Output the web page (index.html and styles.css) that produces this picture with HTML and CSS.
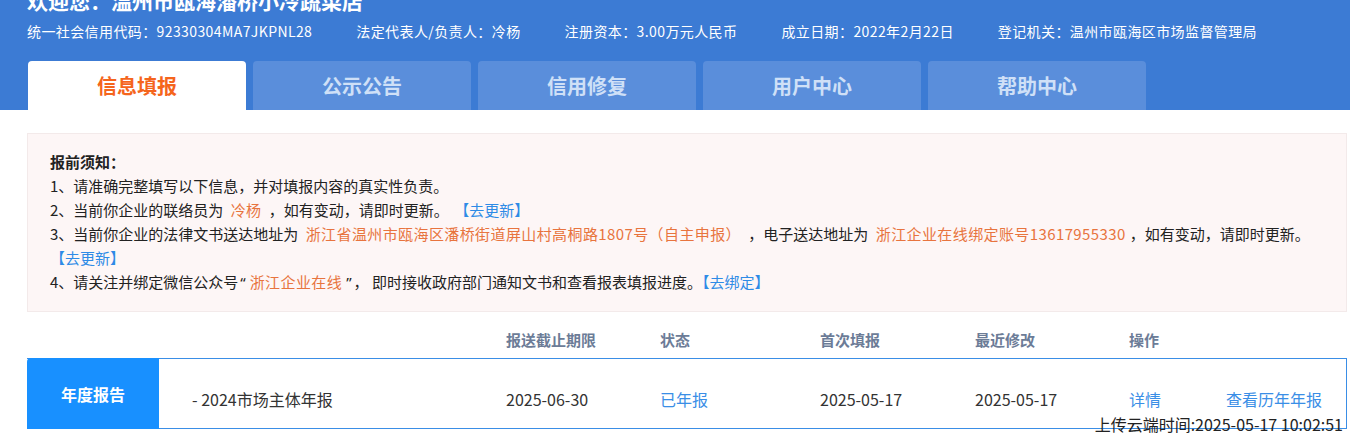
FILE: index.html
```html
<!DOCTYPE html>
<html lang="zh-CN">
<head>
    <meta charset="UTF-8">
    <meta name="viewport" content="width=device-width, initial-scale=1.0">
    <title>信息填报</title>
    <link rel="stylesheet" href="styles.css">
</head>
<body>
    <div class="header">
        <h1 class="welcome">欢迎您：温州市瓯海潘桥小冷蔬菜店</h1>
        <div class="info-row">
            <span>统一社会信用代码：92330304MA7JKPNL28</span>
            <span>法定代表人/负责人：冷杨</span>
            <span>注册资本：3.00万元人民币</span>
            <span>成立日期：2022年2月22日</span>
            <span>登记机关：温州市瓯海区市场监督管理局</span>
        </div>
        <div class="tabs">
            <div class="tab active">信息填报</div>
            <div class="tab">公示公告</div>
            <div class="tab">信用修复</div>
            <div class="tab">用户中心</div>
            <div class="tab">帮助中心</div>
        </div>
    </div>

    <div class="main">
        <div class="notice">
            <p class="notice-title">报前须知：</p>
            <p>1、请准确完整填写以下信息，并对填报内容的真实性负责。</p>
            <p>2、当前你企业的联络员为 <span class="hl">冷杨</span> ，如有变动，请即时更新。 <a class="link gap">【去更新】</a></p>
            <p>3、当前你企业的法律文书送达地址为 <span class="hl">浙江省温州市瓯海区潘桥街道屏山村高桐路1807号（自主申报）</span> ，电子送达地址为 <span class="hl">浙江企业在线绑定账号13617955330</span>，如有变动，请即时更新。 <a class="link">【去更新】</a></p>
            <p>4、请关注并绑定微信公众号<span class="quote">“</span><span class="hl tight">浙江企业在线</span><span class="quote">”</span>， 即时接收政府部门通知文书和查看报表填报进度。<a class="link">【去绑定】</a></p>
        </div>

        <div class="report-head">
            <span></span>
            <span></span>
            <span>报送截止期限</span>
            <span>状态</span>
            <span>首次填报</span>
            <span>最近修改</span>
            <span>操作</span>
            <span></span>
        </div>

        <div class="report-row">
            <div class="report-type">年度报告</div>
            <div class="cell name">- 2024市场主体年报</div>
            <div class="cell">2025-06-30</div>
            <div class="cell blue">已年报</div>
            <div class="cell">2025-05-17</div>
            <div class="cell">2025-05-17</div>
            <div class="cell blue">详情</div>
            <div class="cell blue">查看历年年报</div>
            <div class="upload-time">上传云端时间:2025-05-17 10:02:51</div>
        </div>
    </div>
</body>
</html>
```

FILE: styles.css
```css
* {
    margin: 0;
    padding: 0;
    box-sizing: border-box;
}

body {
    font-family: "Noto Sans CJK SC", "Noto Sans", sans-serif;
    color: #222;
    background: #fff;
    min-height: 100vh;
    overflow: hidden;
}

.header {
    display: flow-root;
    background: #3c7bd4;
    color: #fff;
    padding-left: 27px;
}

.welcome {
    margin-top: -11px;
    font-size: 21px;
    line-height: 22px;
    font-weight: bold;
}

.info-row {
    display: flex;
    gap: 44px;
    margin-top: 10px;
    font-size: 14px;
    line-height: 20px;
    letter-spacing: 0.4px;
}

.tabs {
    display: flex;
    gap: 7px;
    margin-top: 20px;
    padding-left: 1px;
}

.tab {
    width: 218px;
    height: 49px;
    line-height: 49px;
    text-align: center;
    font-size: 20px;
    font-weight: bold;
    color: #cfe0f7;
    background: #5a8edb;
    border-radius: 4px 4px 0 0;
}

.tab.active {
    background: #fff;
    color: #f5651c;
}

.main {
    width: 1320px;
    margin-left: 27px;
    padding-bottom: 30px;
}

.notice {
    margin-top: 23px;
    background: #fdf6f6;
    border: 1px solid #f3eaea;
    padding: 16px 22px 17px 22px;
    font-size: 15px;
    line-height: 24px;
}

.notice-title {
    font-weight: bold;
}

.hl {
    color: #e8743e;
    padding: 0 4px;
    letter-spacing: 0.4px;
}

.hl.tight {
    padding: 0 2px;
}

.quote {
    font-family: "Noto Sans", sans-serif;
    color: #222;
    padding: 0 2px;
}

.link {
    color: #2e8be6;
    cursor: pointer;
    white-space: nowrap;
}

.link.gap {
    margin-left: 2px;
}

.report-head,
.report-row {
    display: grid;
    grid-template-columns: 132px 347px 154px 160px 155px 154px 97px 1fr;
}

.report-head {
    margin-top: 14px;
    height: 28px;
    line-height: 28px;
    font-size: 15px;
    font-weight: bold;
    color: #6c7c97;
}

.report-row {
    position: relative;
    margin-top: 4px;
    height: 71px;
    border: 1px solid #3a8ee6;
    border-left: none;
    align-items: center;
    font-size: 16px;
    color: #333;
}

.report-type {
    height: 71px;
    margin-top: -1px;
    align-self: start;
    background: #1890ff;
    border-radius: 4px 0 0 0;
    color: #fff;
    font-weight: bold;
    display: flex;
    align-items: center;
    justify-content: center;
}

.cell {
    padding-top: 10px;
    white-space: nowrap;
}

.cell.name {
    padding-left: 33px;
}

.cell.blue {
    color: #3a8ee6;
}

.upload-time {
    position: absolute;
    right: 3px;
    bottom: -6px;
    line-height: 20px;
    font-size: 16px;
    color: #222;
}
```
